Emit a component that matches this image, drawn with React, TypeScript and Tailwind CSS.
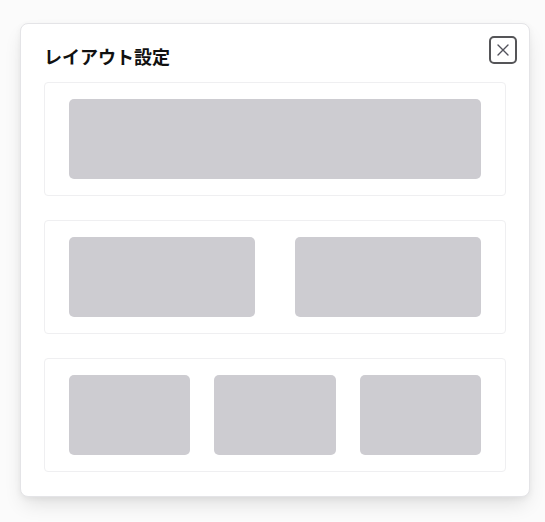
const rows = [1, 2, 3];

function Block() {
  return <div className="h-20 rounded-[5px] bg-[#cdccd1]" />;
}

export default function App() {
  return (
    <div className="min-h-[522px] bg-[#fbfbfb] pt-[23px] px-5" style={{ fontFamily: '"Noto Sans", "Noto Sans CJK JP", sans-serif' }}>
      <div className="relative w-[510px] rounded-lg border border-[#e4e4e7] bg-white px-[23px] pb-6 pt-[21px] shadow-[0_10px_20px_-4px_rgba(0,0,0,0.12),0_2px_6px_rgba(0,0,0,0.05)]">
        <button
          type="button"
          className="absolute right-[12px] top-[12px] flex h-[28px] w-[28px] items-center justify-center rounded-[5px] border-2 border-[#555558] text-[#52525b]"
        >
          <svg width="14" height="14" viewBox="0 0 14 14" fill="none" stroke="currentColor" strokeWidth="1.4" strokeLinecap="round">
            <path d="M2 2L12 12M12 2L2 12" />
          </svg>
        </button>
        <h2 className="mb-[13px] text-[18px] font-bold leading-[24px] text-[#111]">レイアウト設定</h2>
        <div className="flex flex-col gap-6">
          <div className="rounded-[4px] border border-[#efeff1] px-6 py-4">
            <Block />
          </div>
          <div className="rounded-[4px] border border-[#efeff1] px-6 py-4">
            <div className="grid grid-cols-2 gap-10">
              <Block />
              <Block />
            </div>
          </div>
          <div className="rounded-[4px] border border-[#efeff1] px-6 py-4">
            <div className="grid grid-cols-3 gap-6">
              {rows.map((r) => (
                <Block key={r} />
              ))}
            </div>
          </div>
        </div>
      </div>
    </div>
  );
}
